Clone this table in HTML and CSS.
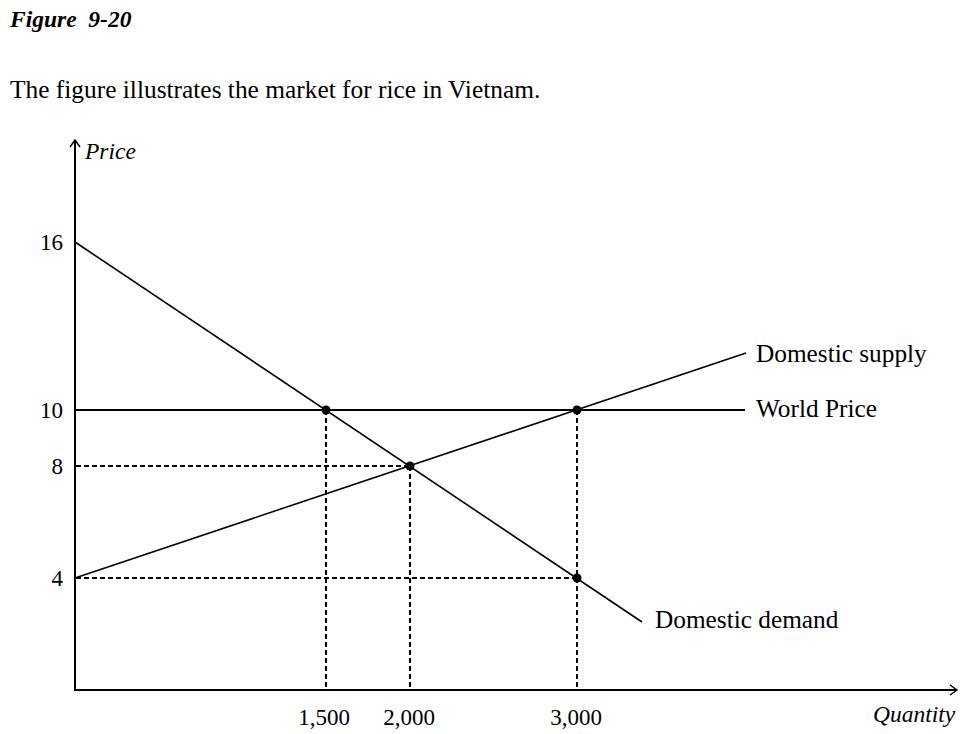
FILE: index.html
```html
<!DOCTYPE html>
<html>
<head>
<meta charset="utf-8">
<link rel="stylesheet" href="styles.css">
</head>
<body>
<div class="header">
  <h1 class="fig-title">Figure&nbsp; 9-20</h1>
  <p class="caption">The figure illustrates the market for rice in Vietnam.</p>
</div>
<svg class="chart" width="965" height="614" viewBox="0 120 965 614" xmlns="http://www.w3.org/2000/svg">
  <g class="axes">
    <line x1="75" y1="140" x2="75" y2="691"/>
    <line x1="74" y1="690" x2="957" y2="690"/>
    <polyline class="arrow" points="70,147 75,140 80,147"/>
    <polyline class="arrow" points="950,685 957,690 950,695"/>
  </g>
  <g class="dash">
    <line x1="76" y1="466" x2="410" y2="466"/>
    <line x1="76" y1="578" x2="577" y2="578"/>
    <line x1="326" y1="410" x2="326" y2="689"/>
    <line x1="410" y1="466" x2="410" y2="689"/>
    <line x1="577" y1="410" x2="577" y2="689"/>
  </g>
  <line class="world" x1="75" y1="410" x2="745" y2="410"/>
  <line class="curve" x1="75" y1="242" x2="642" y2="622"/>
  <line class="curve" x1="75" y1="578" x2="746" y2="353"/>
  <g class="dots">
    <circle cx="326" cy="410" r="4.5"/>
    <circle cx="410" cy="466" r="4.5"/>
    <circle cx="577" cy="410" r="4.5"/>
    <circle cx="577" cy="578" r="4.5"/>
  </g>
  <g class="ylabels">
    <text x="63" y="250">16</text>
    <text x="63" y="418">10</text>
    <text x="63" y="474">8</text>
    <text x="63" y="586">4</text>
  </g>
  <g class="xlabels">
    <text x="324" y="725">1,500</text>
    <text x="409" y="725">2,000</text>
    <text x="576" y="725">3,000</text>
  </g>
  <text class="axis-name" x="85" y="159">Price</text>
  <text class="axis-name" x="873" y="722">Quantity</text>
  <g class="curve-labels">
    <text x="756" y="362">Domestic supply</text>
    <text x="756" y="417">World Price</text>
    <text x="655" y="628">Domestic demand</text>
  </g>
</svg>
</body>
</html>
```
FILE: styles.css
```css
html, body {
  margin: 0;
  padding: 0;
  background: #ffffff;
}
body {
  width: 965px;
  height: 734px;
  overflow: hidden;
  font-family: "Liberation Serif", "Times New Roman", serif;
  color: #000;
}
.header {
  height: 120px;
  box-sizing: border-box;
  padding: 5px 10px 0 10px;
}
.fig-title {
  margin: 0;
  font-size: 23.5px;
  line-height: 28px;
  font-weight: bold;
  font-style: italic;
}
.caption {
  margin: 42px 0 0 0;
  font-size: 25.4px;
  line-height: 28px;
}
.chart {
  display: block;
}
.axes line {
  stroke: #000;
  stroke-width: 2;
}
.arrow {
  fill: none;
  stroke: #000;
  stroke-width: 1.4;
}
.dash line {
  stroke: #000;
  stroke-width: 2;
  stroke-dasharray: 5 3;
}
.world {
  stroke: #000;
  stroke-width: 2;
}
.curve {
  stroke: #000;
  stroke-width: 1.6;
}
.dots circle {
  fill: #000;
}
.chart text {
  font-family: "Liberation Serif", "Times New Roman", serif;
  fill: #000;
}
.ylabels text {
  font-size: 23px;
  text-anchor: end;
}
.xlabels text {
  font-size: 23px;
  text-anchor: middle;
}
.axis-name {
  font-size: 23.5px;
  font-style: italic;
}
.curve-labels text {
  font-size: 25.3px;
}
```
